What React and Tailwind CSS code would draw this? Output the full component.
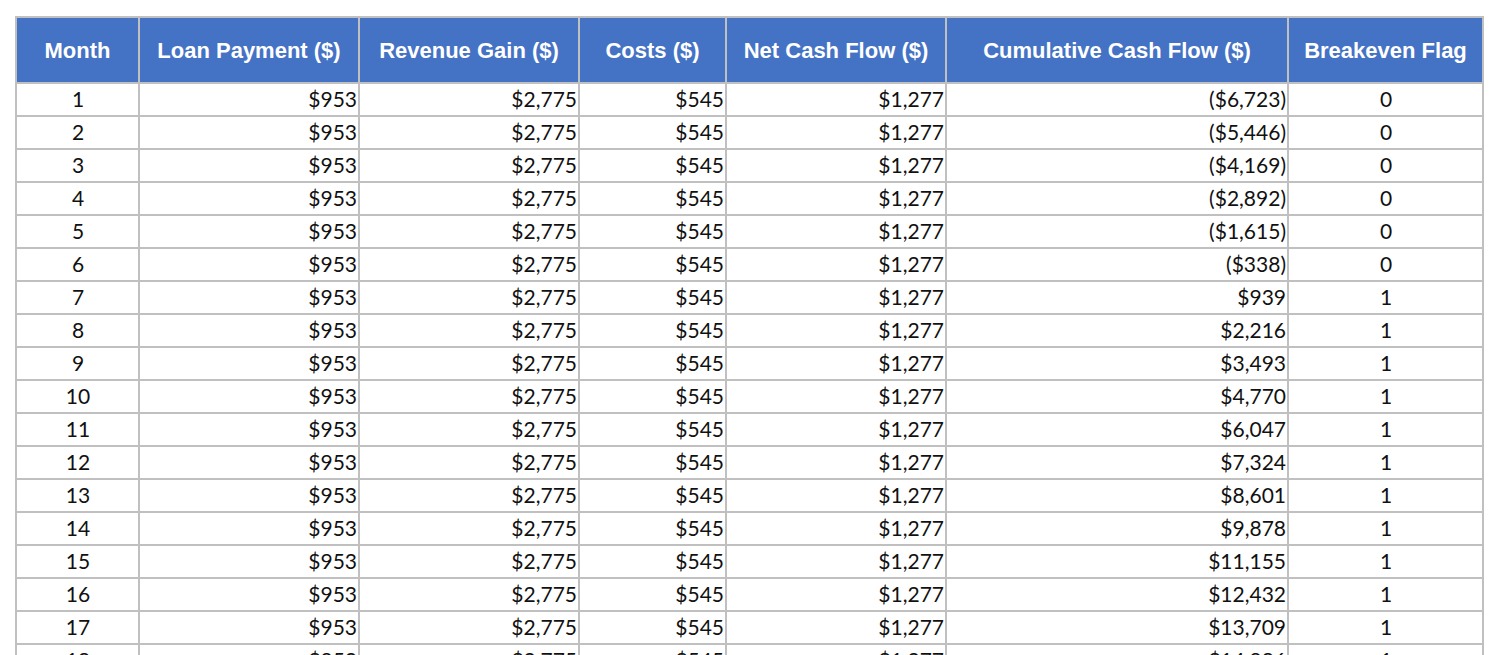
import React from 'react';

const fmt = (n) => {
    const s = '$' + Math.abs(n).toLocaleString('en-US');
    return n < 0 ? `(${s})` : s;
};

const rows = Array.from({ length: 20 }, (_, i) => {
    const month = i + 1;
    const cumulative = -8000 + 1277 * month;
    return {
        month,
        loan: 953,
        revenue: 2775,
        costs: 545,
        net: 1277,
        cumulative,
        flag: cumulative >= 0 ? 1 : 0,
    };
});

const headers = [
    'Month',
    'Loan Payment ($)',
    'Revenue Gain ($)',
    'Costs ($)',
    'Net Cash Flow ($)',
    'Cumulative Cash Flow ($)',
    'Breakeven Flag',
];

const cell = 'border-2 border-[#c0c0c0] leading-none pb-[2px]';

export default function App() {
    return (
        <div className="min-h-screen bg-white pt-[16px] pl-[15px]">
            <table className="table-fixed border-collapse w-[1467px]">
                <colgroup>
                    <col className="w-[123px]" />
                    <col className="w-[220px]" />
                    <col className="w-[220px]" />
                    <col className="w-[147px]" />
                    <col className="w-[220px]" />
                    <col className="w-[342px]" />
                    <col className="w-[195px]" />
                </colgroup>
                <thead>
                    <tr className="h-[66px] bg-[#4472c4]">
                        {headers.map((h) => (
                            <th
                                key={h}
                                className="border-2 border-[#c0c0c0] text-white text-[22px] font-bold text-center font-['Liberation_Sans',Arial,sans-serif] px-1"
                            >
                                {h}
                            </th>
                        ))}
                    </tr>
                </thead>
                <tbody className="font-['Lato',sans-serif] text-[21px] text-[#111]">
                    {rows.map((r) => (
                        <tr key={r.month} className="h-[33px]">
                            <td className={`${cell} text-center pl-[1px]`}>{r.month}</td>
                            <td className={`${cell} text-right pr-[1px]`}>{fmt(r.loan)}</td>
                            <td className={`${cell} text-right pr-[1px]`}>{fmt(r.revenue)}</td>
                            <td className={`${cell} text-right pr-[1px]`}>{fmt(r.costs)}</td>
                            <td className={`${cell} text-right pr-[1px]`}>{fmt(r.net)}</td>
                            <td className={`${cell} text-right pr-[1px]`}>{fmt(r.cumulative)}</td>
                            <td className={`${cell} text-center pl-[1px]`}>{r.flag}</td>
                        </tr>
                    ))}
                </tbody>
            </table>
        </div>
    );
}
